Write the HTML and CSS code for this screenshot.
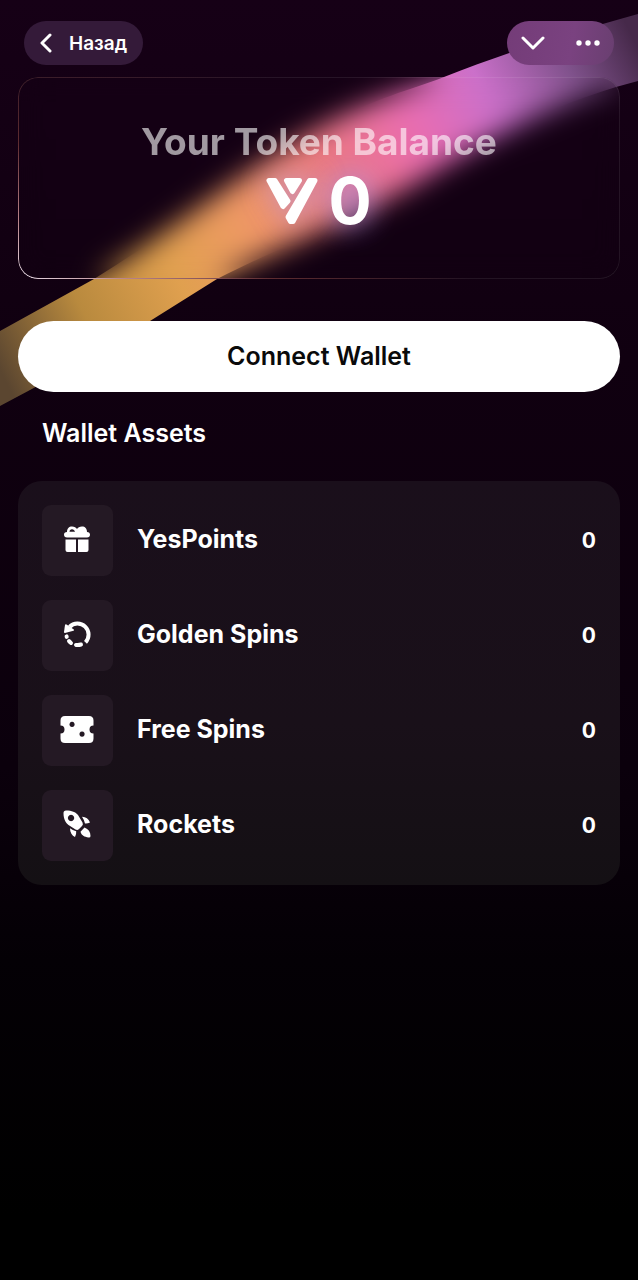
FILE: index.html
```html
<!DOCTYPE html>
<html lang="en">
<head>
  <meta charset="UTF-8">
  <meta name="viewport" content="width=device-width, initial-scale=1">
  <title>Wallet</title>
  <link rel="stylesheet" href="styles.css">
</head>
<body>
  <svg class="beam" viewBox="0 0 638 420" preserveAspectRatio="none" aria-hidden="true">
    <defs>
      <linearGradient id="beam-fill" gradientUnits="userSpaceOnUse" x1="0" y1="370" x2="638" y2="48">
        <stop offset="0" stop-color="#5b4630"/>
        <stop offset=".14" stop-color="#b98a3e"/>
        <stop offset=".28" stop-color="#e0a04f"/>
        <stop offset=".4" stop-color="#ee9864"/>
        <stop offset=".53" stop-color="#ec7a7e"/>
        <stop offset=".67" stop-color="#e96cb0"/>
        <stop offset=".78" stop-color="#cb70ca"/>
        <stop offset=".9" stop-color="#80528c"/>
        <stop offset="1" stop-color="#46294a"/>
      </linearGradient>
    </defs>
    <path fill="url(#beam-fill)" d="M0 331 L94 279 C184 224 254 162 326 124 C376 98 410 90 444 77 C510 51 570 33 638 14 V81 L616 87 C535 112 474 146 414 184 C346 224 285 244 217 279 L150 321 C100 351 50 380 0 406 Z"/>
  </svg>

  <header class="topbar">
    <button class="pill back" type="button">
      <svg width="12" height="20" viewBox="0 0 12 20"><path d="M10 2 L2 10 L10 18"/></svg>
      Назад
    </button>
    <div class="pill actions">
      <button type="button" aria-label="Minimize">
        <svg width="24" height="14" viewBox="0 0 24 14"><path d="M2 2 L12 12 L22 2"/></svg>
      </button>
      <button type="button" aria-label="More">
        <svg class="dots" width="24" height="6" viewBox="0 0 24 6"><circle cx="3" cy="3" r="2.700"/><circle cx="12" cy="3" r="2.700"/><circle cx="21" cy="3" r="2.700"/></svg>
      </button>
    </div>
  </header>

  <main>
    <section class="balance">
      <h1>Your Token Balance</h1>
      <div class="amount">
        <svg width="52" height="48" viewBox="0 0 52 48" aria-hidden="true">
          <path class="bar" d="M3 3.500 H9 L22 24 L17 29.500 Z"/>
          <path class="bar" d="M43.500 3.500 H49 L27 44.500 H24.500 L22 40 Z"/>
          <path class="bar" d="M20.500 3.500 H33.500 L26.500 14.500 Z"/>
        </svg>
        <span>0</span>
      </div>
    </section>

    <button class="connect" type="button">Connect Wallet</button>

    <h2>Wallet Assets</h2>
    <ul class="assets">
      <li>
        <span class="icon">
          <svg width="28" height="28" viewBox="0 0 28 28"><path fill-rule="evenodd" d="M4 12.500 C2 12.500 1 11.400 1 9.800 C1 8.200 2 7.200 4 7.100 C4 3.500 6 1.500 9 1.500 C11.500 1.500 13 2.500 14 4 C15 2.500 16.500 1.500 19 1.500 C22 1.500 24 3.500 24 7 C26 7.200 27 8.200 27 9.800 C27 11.400 26 12.500 24 12.500 Z M6.500 6.800 H12 C11.500 5 10.500 4.200 9 4.200 C7.500 4.200 6.500 5 6.500 6.800 Z"/><path d="M2.500 14.500 H13 V27 H4.500 Q2.500 27 2.500 25 Z M15 14.500 H25.500 V25 Q25.500 27 23.500 27 H15 Z"/></svg>
        </span>
        <span class="name">YesPoints</span>
        <span class="count">0</span>
      </li>
      <li>
        <span class="icon">
          <svg width="28" height="28" viewBox="0 0 28 28"><path class="arc" d="M6.500 7 A11 11 0 1 1 22.500 22.300"/><path class="arc dash" d="M18 24.500 A11 11 0 0 1 13 24.900"/><path class="arc dash" d="M8 23 A11 11 0 0 1 6 21"/><path class="arc dash" d="M3.700 16.900 L3.600 16.400"/><path d="M2 5 L1 12 Q1 13 2 12.900 L10.500 10.800 Q11.500 10.300 10.800 9.500 L3.500 4.500 Q2.300 4 2 5 Z"/></svg>
        </span>
        <span class="name">Golden Spins</span>
        <span class="count">0</span>
      </li>
      <li>
        <span class="icon">
          <svg width="34" height="27" viewBox="0 0 34 27"><path fill-rule="evenodd" d="M5 0 H29 Q33.500 0 33.500 4.500 V9.500 A4 4 0 0 0 33.500 17.500 V22.500 Q33.500 27 29 27 H5 Q.500 27 .500 22.500 V17.500 A4 4 0 0 0 .500 9.500 V4.500 Q.500 0 5 0 Z M12 5.800 a2.600 2.600 0 1 0 .1 0 Z M22 15.500 a2.600 2.600 0 1 0 .1 0 Z"/></svg>
        </span>
        <span class="name">Free Spins</span>
        <span class="count">0</span>
      </li>
      <li>
        <span class="icon">
          <svg width="28" height="28" viewBox="0 0 28 28"><path fill-rule="evenodd" d="M.500 3 Q.500 .500 3 .500 C9 .500 12.500 2 15 5 L19.500 12.500 Q20.500 14.500 19 16 L16 19 Q14.500 20.500 12.500 19.500 L5.500 15 C2.500 12.500 .500 9 .500 3 Z M8 4.800 a3.200 3.200 0 1 0 .1 0 Z"/><path d="M19 6.800 C23 7 25.500 9 27 12.500 Q24.500 13.800 22 13.500 Q21.500 10.500 19 6.800 Z M7 18.200 Q10.500 20.800 13.200 21.300 Q13.500 24.500 12 27 C9 25.500 7 22.500 7 18.200 Z M21.500 17.500 C25.500 19 27.500 22 27.500 26 Q27.500 27.800 25.500 27.500 C21.500 27 18.500 25.500 17.500 21.800 Z"/></svg>
        </span>
        <span class="name">Rockets</span>
        <span class="count">0</span>
      </li>
    </ul>
  </main>
</body>
</html>
```

FILE: styles.css
```css
* {
  box-sizing: border-box;
}

body {
  margin: 0;
  min-height: 100vh;
  position: relative;
  background: linear-gradient(#160016, #100010 28%, #0b000c 60%, #040005 75%, #000 95%);
  color: #fff;
  font-family: Inter, "Liberation Sans", sans-serif;
}

button {
  border: none;
  padding: 0;
  background: none;
  color: inherit;
  font: inherit;
  cursor: pointer;
}

/* light streak behind the header and the balance card */
.beam {
  position: absolute;
  top: 0;
  left: 0;
  width: 100%;
  height: 420px;
}

.topbar {
  position: relative;
  display: flex;
  justify-content: space-between;
  padding: 21px 24px 12px;
}

.pill {
  display: flex;
  align-items: center;
  height: 44px;
  border-radius: 22px;
  background: #341a39;
  font-size: 19px;
  font-weight: 600;
}

.pill svg {
  fill: none;
  stroke: #fff;
  stroke-width: 3;
  stroke-linecap: round;
  stroke-linejoin: round;
}

.pill .dots {
  fill: #fff;
  stroke: none;
}

.back {
  gap: 17px;
  padding: 0 16px;
}

.actions {
  gap: 31px;
  padding: 0 14px;
  background: linear-gradient(100deg, #743c78, #7a4280 60%, #693f70);
}

.actions button {
  display: flex;
}

main {
  position: relative;
  padding: 0 18px;
}

.balance {
  position: relative;
  height: 202px;
  padding-top: 41px;
  border-radius: 20px;
  text-align: center;
  backdrop-filter: blur(14px);
}

.balance::before {
  content: "";
  position: absolute;
  inset: 0;
  border-radius: 20px;
  padding: 1px;
  background: radial-gradient(ellipse 100% 160% at 0 100%, #e8dce8, #b8848a 18%, #5e2c30 42%, rgba(255, 255, 255, .08) 75%);
  mask: linear-gradient(#000 0 0) content-box exclude, linear-gradient(#000 0 0);
}

h1 {
  margin: 0;
  font-size: 37px;
  line-height: 48px;
  font-weight: 700;
  color: rgba(255, 255, 255, .6);
}

.amount {
  display: flex;
  justify-content: center;
  align-items: center;
  gap: 10px;
  font-size: 64px;
  line-height: 70px;
  font-weight: 700;
  text-shadow: 0 0 28px rgba(150, 150, 255, .9);
}

.amount svg {
  overflow: visible;
  fill: #fff;
  stroke: #fff;
  stroke-linejoin: round;
  filter: drop-shadow(0 0 14px rgba(170, 160, 255, .6));
}

.amount .bar {
  stroke-width: 5;
}

.connect {
  display: block;
  width: 100%;
  height: 71px;
  margin: 42px 0 24px;
  padding-bottom: 2px;
  border-radius: 36px;
  background: #fff;
  color: #0a0a0a;
  font-size: 25px;
  font-weight: 600;
}

h2 {
  margin: 0 24px 31px;
  font-size: 25px;
  line-height: 34px;
  font-weight: 600;
}

.assets {
  display: grid;
  gap: 24px;
  margin: 0;
  padding: 24px;
  border-radius: 24px;
  background: linear-gradient(#1a0f1b, #191019 60%, #141014);
  list-style: none;
}

.assets li {
  display: flex;
  align-items: center;
  gap: 24px;
  font-size: 25px;
  font-weight: 700;
}

.icon {
  display: flex;
  justify-content: center;
  align-items: center;
  width: 71px;
  height: 71px;
  padding: 0 1px 3px 0;
  border-radius: 9px;
  background: #241924;
}

.icon svg {
  fill: #fff;
}

.icon .arc {
  fill: none;
  stroke: #fff;
  stroke-width: 4;
}

.icon .dash {
  stroke-linecap: round;
}

.name {
  flex: 1;
  padding-bottom: 3px;
}

.count {
  font-size: 21px;
}
```
